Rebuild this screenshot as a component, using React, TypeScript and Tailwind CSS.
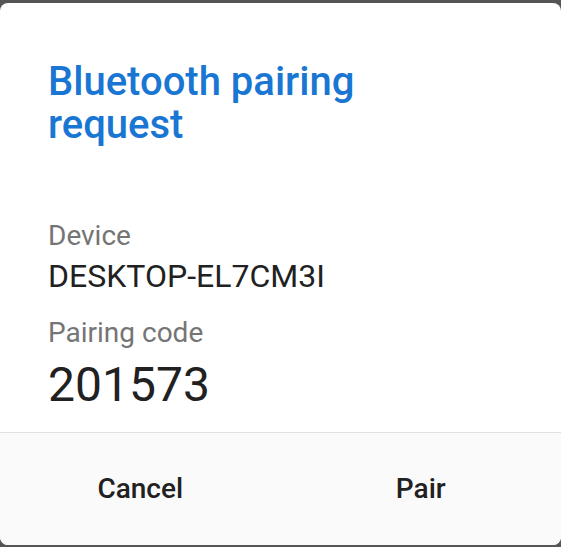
import React from 'react'

// Android-style Bluetooth pairing dialog
export default function App() {
  return (
    <div className="w-[561px] h-[547px] bg-[#555555] pt-[3px] pb-[2px]" style={{ fontFamily: 'Roboto, "Noto Sans", sans-serif' }}>
      <div className="h-full bg-white rounded-[8px] overflow-hidden flex flex-col">
        {/* Title */}
        <h1 className="ml-[48px] mt-[57px] text-[40px] leading-[43px] font-medium text-[#1976d2] w-[360px]">
          Bluetooth pairing request
        </h1>

        {/* Body */}
        <div className="pl-[48px] pt-[74px] flex-1">
          <p className="text-[28px] leading-[32px] text-[#757575]">Device</p>
          <p className="text-[32px] leading-[36px] text-[#212121] mt-[6px]">DESKTOP-EL7CM3I</p>
          <p className="text-[28px] leading-[32px] text-[#757575] mt-[23px]">Pairing code</p>
          <p className="text-[48px] leading-[52px] text-[#212121] mt-[10px]">201573</p>
        </div>

        {/* Actions */}
        <div className="h-[113px] border-t border-[#e0e0e0] bg-[#fafafa] grid grid-cols-2">
          <button className="text-[28px] font-medium text-[#212121]">Cancel</button>
          <button className="text-[28px] font-medium text-[#212121]">Pair</button>
        </div>
      </div>
    </div>
  )
}
